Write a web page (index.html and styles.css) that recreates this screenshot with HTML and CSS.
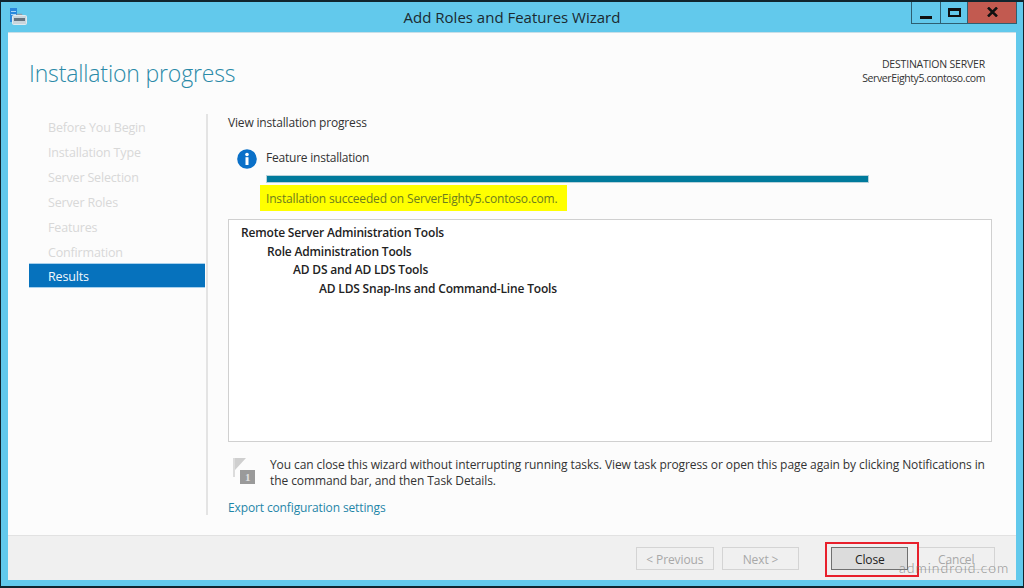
FILE: index.html
```html
<!DOCTYPE html>
<html lang="en">
<head>
<meta charset="utf-8">
<title>Add Roles and Features Wizard</title>
<link rel="stylesheet" href="styles.css">
</head>
<body>
<div class="window">
  <header class="titlebar">
    <svg class="app-icon" width="18" height="18" viewBox="0 0 18 18">
      <rect x="0" y="0" width="7" height="14" fill="#2a88dc"/>
      <rect x="1" y="3" width="5" height="1" fill="#a9d5f5"/>
      <rect x="1" y="6" width="5" height="1" fill="#a9d5f5"/>
      <path d="M7.500 7.500V6.500h4v1" fill="none" stroke="#8e9ca6" stroke-width="1.500"/>
      <rect x="2.500" y="7.500" width="14" height="9" rx="1" fill="#c9d5dc" stroke="#e2eaee" stroke-width="1"/>
      <rect x="4" y="10" width="11" height="3" fill="#64737f"/>
    </svg>
    <div class="title">Add Roles and Features Wizard</div>
    <div class="controls">
      <div class="ctl ctl-min"><span class="glyph-min"></span></div>
      <div class="ctl ctl-max"><span class="glyph-max"></span></div>
      <div class="ctl ctl-close">
        <svg width="11" height="10" viewBox="0 0 11 10"><path d="M1 .5l9 9M10 .5l-9 9" stroke="#111" stroke-width="2.500" fill="none"/></svg>
      </div>
    </div>
  </header>
  <div class="client">
    <div class="head">
      <h1 class="page-title">Installation progress</h1>
      <div class="dest">
        <div>DESTINATION SERVER</div>
        <div class="dest-name">ServerEighty5.contoso.com</div>
      </div>
    </div>
    <div class="body">
      <nav class="steps">
        <div class="step">Before You Begin</div>
        <div class="step">Installation Type</div>
        <div class="step">Server Selection</div>
        <div class="step">Server Roles</div>
        <div class="step">Features</div>
        <div class="step">Confirmation</div>
        <div class="step step-active">Results</div>
      </nav>
      <main class="pane">
        <div class="view-label">View installation progress</div>
        <div class="feature">
          <svg class="info" width="20" height="20" viewBox="0 0 20 20">
            <circle cx="10" cy="10" r="9.800" fill="#0a70c8"/>
            <circle cx="10" cy="5.500" r="1.800" fill="#fff"/>
            <rect x="8.500" y="8.200" width="3" height="7.800" fill="#fff"/>
          </svg>
          <div class="feature-main">
            <div class="feature-name">Feature installation</div>
            <div class="bar"></div>
            <div class="success">Installation succeeded on ServerEighty5.contoso.com.</div>
          </div>
        </div>
        <div class="results">
          <div class="row lvl0">Remote Server Administration Tools</div>
          <div class="row lvl1">Role Administration Tools</div>
          <div class="row lvl2">AD DS and AD LDS Tools</div>
          <div class="row lvl3">AD LDS Snap-Ins and Command-Line Tools</div>
        </div>
        <div class="notice">
          <svg class="flag" width="24" height="27" viewBox="0 0 24 27">
            <path d="M1 0h2v19H1z" fill="#dcdcdc"/>
            <path d="M3 0h11L3 12z" fill="#cfcfcf"/>
            <rect x="8" y="12" width="15" height="14" fill="#9a9a9a"/>
          </svg>
          <span class="flag-num">1</span>
          <p class="notice-text">You can close this wizard without interrupting running tasks. View task progress or open this page again by clicking Notifications in the command bar, and then Task Details.</p>
        </div>
        <a class="export">Export configuration settings</a>
      </main>
    </div>
    <footer class="footer">
      <button class="btn btn-off">&lt; Previous</button>
      <button class="btn btn-off btn-next">Next &gt;</button>
      <span class="close-mark"><button class="btn btn-close">Close</button></span>
      <button class="btn btn-off">Cancel</button>
    </footer>
  </div>
  <div class="watermark">admindroid.com</div>
</div>
</body>
</html>
```
FILE: styles.css
```css
* { box-sizing: border-box; }
html, body { margin: 0; padding: 0; }
body { width: 1024px; height: 588px; overflow: hidden; font-family: "Open Sans", "Noto Sans", sans-serif; background: #62c9ec; }
.window { position: relative; width: 1024px; height: 588px; background: #62c9ec; border: 1px solid #10252e; border-width: 2px 1px 2px 1px; display: flex; flex-direction: column; padding: 0 7px 6px 7px; }
.titlebar { height: 30px; flex: none; display: flex; align-items: flex-start; position: relative; }
.app-icon { margin: 6px 0 0 2px; }
.title { position: absolute; left: 0; right: 0; top: 5px; text-align: center; font-size: 15px; color: #1c2a30; }
.controls { margin-left: auto; margin-right: -1px; display: flex; height: 22px; border: 1px solid #2d5f72; border-top: none; position: relative; z-index: 1; width: 106px; }
.ctl { display: flex; align-items: center; justify-content: center; }
.ctl-min { width: 29px; border-right: 1px solid #2d5f72; }
.ctl-max { width: 27px; border-right: 1px solid #2d5f72; }
.ctl-close { flex: 1; background: #c25a50; padding-bottom: 1px; }
.glyph-min { display: block; width: 12px; height: 3px; background: #111; margin-top: 10px; }
.glyph-max { display: block; width: 13px; height: 9px; border: 2px solid #111; border-top-width: 3px; margin-top: -1px; }
.client { flex: 1; background: #fcfcfc; display: flex; flex-direction: column; border-top: 1px solid #c8dfe8; min-height: 0; }
.head { height: 81px; flex: none; padding: 0 31px 0 21px; display: flex; justify-content: space-between; }
.page-title { margin: 24px 0 0; font-size: 23px; font-weight: 300; color: #2a8aa8; letter-spacing: -0.15px; line-height: 33px; }
.dest { margin-top: 24px; text-align: right; font-size: 10.5px; line-height: 14px; color: #333; letter-spacing: -0.2px; }
.dest-name { letter-spacing: -0.4px; }
.body { flex: 1; display: flex; min-height: 0; }
.steps { width: 198px; flex: none; padding-left: 21px; padding-top: 1px; }
.step { height: 25px; width: 176px; font-size: 12.5px; line-height: 25px; padding-left: 19px; color: #d8d8d8; letter-spacing: -0.17px; }
.step-active { margin-top: -2px; background: #0672bd; color: #f2f8fc; border-top: 1px solid #a8d0ec; border-bottom: 1px solid #a8d0ec; }
.pane { flex: 1; border-left: 2px solid #e4e4e4; height: 401px; margin-bottom: 20px; padding-left: 20px; padding-right: 24px; display: flex; flex-direction: column; }
.view-label { font-size: 12px; line-height: 16px; color: #333; letter-spacing: -0.17px; margin-top: 1px; }
.feature { display: flex; margin-top: 19px; margin-left: 9px; }
.info { flex: none; margin-top: -1px; }
.feature-main { margin-left: 9px; }
.feature-name { font-size: 12px; line-height: 16px; color: #333; letter-spacing: -0.22px; }
.bar { width: 603px; height: 8px; margin-top: 9px; background: #007a9c; border: 1px solid #b8d2da; }
.success { background: #ffff00; margin-left: -6px; width: 307px; height: 26px; padding: 1px 0 0 6px; font-size: 12px; line-height: 26px; color: #6d7d1f; letter-spacing: -0.17px; margin-top: 2px; }
.results { height: 223px; flex: none; margin-top: 8px; border: 1px solid #d0d0d0; background: #fff; padding-top: 4px; }
.row { font-size: 12px; font-weight: 600; line-height: 18.700px; color: #222; letter-spacing: -0.18px; }
.lvl0 { padding-left: 12px; }
.lvl1 { padding-left: 38px; }
.lvl2 { padding-left: 64px; }
.lvl3 { padding-left: 90px; }
.notice { position: relative; display: flex; margin-top: 15px; }
.flag { flex: none; margin-left: 4px; margin-top: 1px; }
.flag-num { position: absolute; left: 17px; top: 14px; font-size: 11px; line-height: 12px; color: #e0e0e0; font-weight: 700; font-family: "Liberation Serif", serif; }
.notice-text { margin: 0 0 0 14px; font-size: 12px; line-height: 16px; color: #333; letter-spacing: -0.09px; }
.export { font-size: 12px; line-height: 16px; color: #1f86a8; letter-spacing: -0.13px; margin-top: 11px; }
.footer { flex: none; height: 45px; background: #f0f0f0; border-top: 1px solid #e2e2e2; display: flex; align-items: flex-start; padding: 11px 21px 0 628px; }
.btn { width: 78px; height: 23px; font: inherit; font-size: 12px; padding: 1px 0 0; letter-spacing: -0.1px; background: #f0f0f0; }
.btn-off { border: 1px solid #d4d4d4; color: #a8a8a8; }
.btn-next { margin-left: 8px; }
.close-mark { position: relative; margin-left: 32px; margin-right: 9px; display: block; }
.close-mark::after { content: ""; position: absolute; left: -6px; top: -5px; width: 90px; height: 31px; border: 2px solid #e8202c; pointer-events: none; }
.btn-close { display: block; width: 77px; border: 1px solid #707070; background: #dcdcdc; color: #222; }
.watermark { position: absolute; left: 898px; top: 556px; font-family: "Lato", sans-serif; font-weight: 300; font-size: 14px; line-height: 20px; color: #808080; letter-spacing: 1px; opacity: 0.85; }
```
